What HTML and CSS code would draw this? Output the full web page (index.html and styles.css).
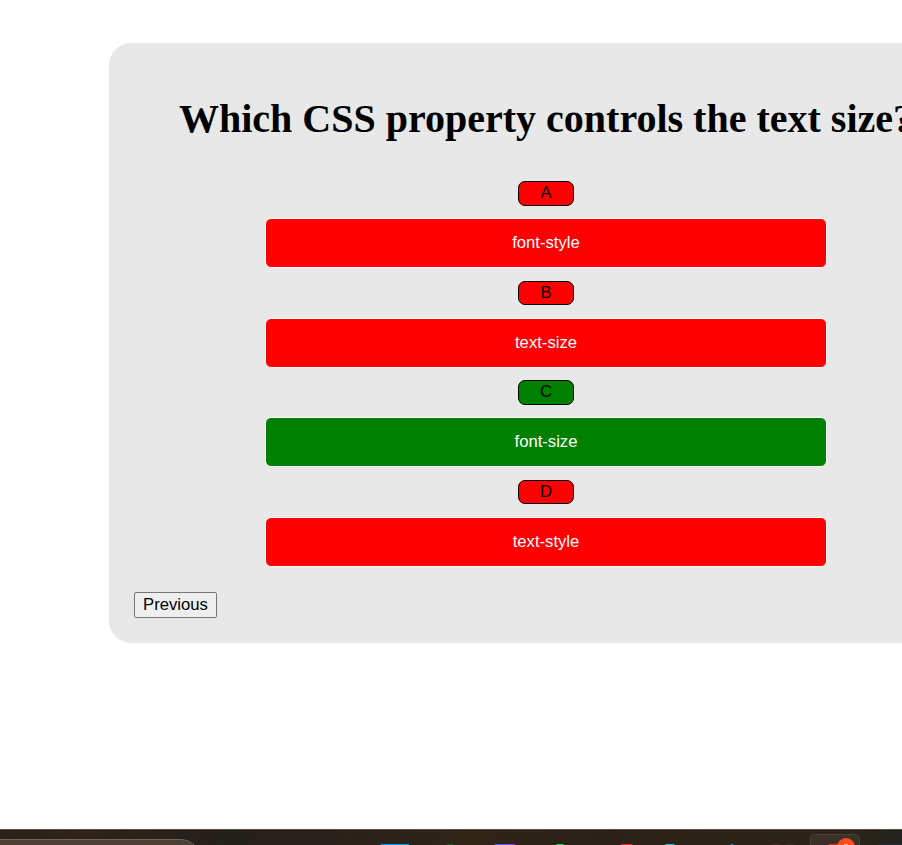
FILE: index.html
```html
<!DOCTYPE html>
<html lang="en">
<head>
<meta charset="utf-8">
<title>CSS Quiz</title>
<link rel="stylesheet" href="styles.css">
</head>
<body>
<main class="quiz">
  <h1 class="question">Which CSS property controls the text size?</h1>
  <div class="answers">
    <div class="letter wrong">A</div>
    <button class="option wrong">font-style</button>
    <div class="letter wrong">B</div>
    <button class="option wrong">text-size</button>
    <div class="letter right">C</div>
    <button class="option right">font-size</button>
    <div class="letter wrong">D</div>
    <button class="option wrong">text-style</button>
  </div>
  <button class="previous">Previous</button>
</main>
<footer class="taskbar">
  <svg width="902" height="17" viewBox="0 0 902 17">
    <path d="M-5 10.500H180Q190 10.500 196 18H-5Z" fill="#4c4036" stroke="#6f655c"/>
    <path d="M381 15h28v2h-29z" fill="#0b98dc"/>
    <path d="M447 15h6v1h-6z" fill="#176322"/>
    <path d="M495 15h11v2h-12z" fill="#5360dc"/>
    <path d="M506 15h9l1 2h-10z" fill="#8447c8"/>
    <path d="M557 15h6l2 2h-10z" fill="#24ce60"/>
    <path d="M621 15h11l2 2h-14z" fill="#d62e26"/>
    <path d="M666 15h8l2 2h-12z" fill="#28c6d5"/>
    <path d="M731 15h2l1 2h-4z" fill="#139bd9"/>
    <path d="M772 15h8v1h-8zM787 15h7v1h-7z" fill="#4a2b1b"/>
    <path d="M810.500 18V10Q810.500 5.500 815 5.500H855Q859.500 5.500 859.500 10V18" fill="#393127" stroke="#484138"/>
    <path d="M829 15h9v2h-10z" fill="#e13420"/>
    <circle cx="846" cy="18" r="9" fill="#f84e1b"/>
    <path d="M844 15h4v1h-4z" fill="#ffc2ae"/>
    <path d="M878 15h24v2h-24z" fill="#26303b"/>
  </svg>
</footer>
</body>
</html>
```
FILE: styles.css
```css
* {
  box-sizing: border-box;
}

html {
  overflow: hidden;
}

body {
  margin: 0;
  height: 845px;
  padding-top: 43px;
  display: flex;
  flex-direction: column;
  overflow: hidden;
  background: #fff;
  color: #000;
  font-family: "Liberation Sans", Arial, sans-serif;
  font-size: 16.667px;
}

.quiz {
  flex: none;
  width: 874px;
  height: 600px;
  margin-left: 109px;
  padding: 25px;
  display: flex;
  flex-direction: column;
  border-radius: 22px;
  background: #e8e8e8;
}

.question {
  margin: 27px 0 39.2px;
  font: bold 40px/47px "Liberation Serif", "Times New Roman", serif;
  text-align: center;
  white-space: nowrap;
}

.answers {
  display: flex;
  flex-direction: column;
  align-items: center;
  gap: 12.6px;
}

.letter {
  width: 56px;
  height: 24.4px;
  border: 1px solid #000;
  border-radius: 7px;
  line-height: 21px;
  text-align: center;
}

.option {
  width: 562px;
  height: 50px;
  padding: 0;
  border: 1px solid #fff;
  border-radius: 6px;
  color: #fff;
  font: inherit;
}

.wrong {
  background: #f00;
}

.right {
  background: #008000;
}

.previous {
  width: 83px;
  height: 26px;
  margin-top: auto;
  padding: 0;
  border: 1px solid #767676;
  border-radius: 2px;
  background: #efefef;
  color: #000;
  font: inherit;
}

.taskbar {
  height: 16px;
  margin-top: auto;
  border-top: 1px solid #524c45;
  background: linear-gradient(90deg, #2b2117 0, #302215 80px, #24201c 230px, #2b221a 380px, #302416 470px, #2a211a 610px, #2c2417 700px, #2d2418 850px, #22231f 902px);
}

.taskbar svg {
  display: block;
  margin-top: -1px;
}
```
